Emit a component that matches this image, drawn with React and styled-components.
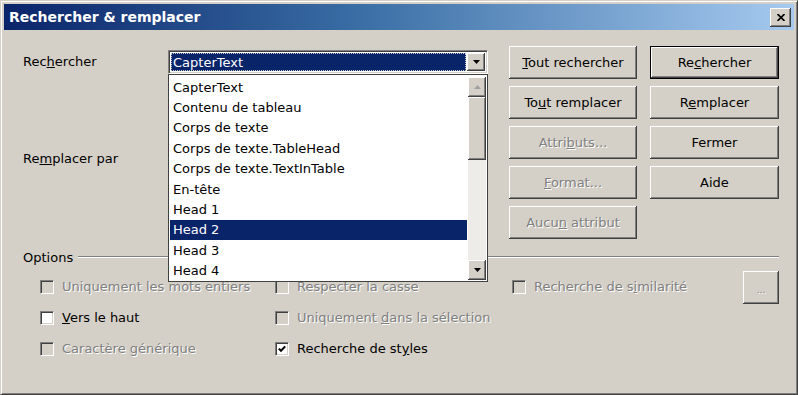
import React from 'react';
import styled, { createGlobalStyle, css } from 'styled-components';

const GlobalStyle = createGlobalStyle`
  html, body {
    margin: 0;
    padding: 0;
    background: #ffffff;
  }
  body {
    font-family: "DejaVu Sans", sans-serif;
    font-size: 13px;
    color: #000;
  }
`;

const raised = css`
  box-shadow: inset -1px -1px #404040, inset 1px 1px #ffffff,
    inset -2px -2px #808080, inset 2px 2px #d4d0c8;
`;

const disabledText = css`
  color: #808080;
  text-shadow: 1px 1px 0 #ffffff;
`;

const Window = styled.div`
  width: 798px;
  height: 395px;
  box-sizing: border-box;
  background: #d4d0c8;
  border: 1px solid;
  border-color: #d4d0c8 #404040 #404040 #d4d0c8;
  box-shadow: inset 1px 1px #ffffff, inset -1px -1px #808080;
  padding: 3px;
  display: flex;
  flex-direction: column;
`;

const TitleBar = styled.div`
  height: 26px;
  flex-shrink: 0;
  display: flex;
  align-items: center;
  justify-content: space-between;
  padding: 0 3px 0 5px;
  background: linear-gradient(to right, #0a246a 0%, #3a6ea5 45%, #a6caf0 100%);
`;

const Title = styled.span`
  color: #ffffff;
  font-weight: bold;
  font-size: 14px;
`;

const CloseButton = styled.div`
  width: 21px;
  height: 19px;
  background: #d4d0c8;
  ${raised};
  display: flex;
  align-items: center;
  justify-content: center;
`;

const Content = styled.div`
  flex: 1;
  display: flex;
  flex-direction: column;
  padding: 16px 15px 0 19px;
`;

const TopSection = styled.div`
  display: flex;
  gap: 21px;
`;

const LeftPane = styled.div`
  width: 465px;
  display: flex;
  flex-direction: column;
`;

const FieldRow = styled.div`
  display: grid;
  grid-template-columns: 145px 320px;
  align-items: center;
  margin-top: ${(p) => p.$top}px;
`;

const Label = styled.span`
  line-height: 16px;
`;

const ComboWrap = styled.div`
  position: relative;
  height: 24px;
`;

const Combo = styled.div`
  height: 24px;
  box-sizing: border-box;
  background: #ffffff;
  border: 1px solid;
  border-color: #808080 #ffffff #ffffff #808080;
  box-shadow: inset 1px 1px #404040, inset -1px -1px #d4d0c8;
  padding: 2px;
  display: flex;
`;

const ComboValue = styled.div`
  flex: 1;
  background: ${(p) => (p.$selected ? '#0a246a' : '#ffffff')};
  color: ${(p) => (p.$selected ? '#ffffff' : '#000000')};
  outline: ${(p) => (p.$selected ? '1px dotted #c8c8c8' : 'none')};
  outline-offset: -1px;
  display: flex;
  align-items: center;
  padding-left: 2px;
  margin-right: 1px;
`;

const ArrowButton = styled.div`
  width: 18px;
  flex-shrink: 0;
  height: ${(p) => (p.$h ? `${p.$h}px` : 'auto')};
  background: #d4d0c8;
  ${raised};
  display: flex;
  align-items: center;
  justify-content: center;
`;

const DropList = styled.div`
  position: absolute;
  top: 24px;
  left: 0;
  width: 320px;
  height: 208px;
  box-sizing: border-box;
  background: #ffffff;
  border: 1px solid #404040;
  padding: 2px 1px 1px 1px;
  display: flex;
  z-index: 10;
`;

const Items = styled.div`
  flex: 1;
  display: flex;
  flex-direction: column;
  margin-right: 1px;
`;

const Item = styled.div`
  height: 20.4px;
  flex-shrink: 0;
  display: flex;
  align-items: center;
  padding-left: 3px;
  white-space: nowrap;
  background: ${(p) => (p.$active ? '#0a246a' : 'transparent')};
  color: ${(p) => (p.$active ? '#ffffff' : '#000000')};
`;

const ScrollBar = styled.div`
  width: 18px;
  display: flex;
  flex-direction: column;
  background: #eeece8;
`;

const Thumb = styled.div`
  height: 63px;
  background: #d4d0c8;
  ${raised};
`;

const Track = styled.div`
  flex: 1;
`;

const ButtonGrid = styled.div`
  display: grid;
  grid-template-columns: 128px 129px;
  grid-auto-rows: 33px;
  gap: 7px 13px;
`;

const Button = styled.div`
  box-sizing: border-box;
  background: #d4d0c8;
  display: flex;
  align-items: center;
  justify-content: center;
  white-space: pre;
  grid-column: ${(p) => p.$col || 'auto'};
  ${raised};
  ${(p) => p.$disabled && disabledText};
  ${(p) =>
    p.$default &&
    css`
      border: 1px solid #000000;
    `};
`;

const OptionsHeader = styled.div`
  display: flex;
  align-items: center;
  margin-top: 10px;
  height: 16px;
`;

const Rule = styled.div`
  flex: 1;
  margin-left: 5px;
  border-top: 1px solid #808080;
  border-bottom: 1px solid #ffffff;
`;

const OptionsGrid = styled.div`
  display: grid;
  grid-template-columns: 235px 237px 231px 36px;
  grid-template-rows: repeat(3, 31px);
  padding-left: 17px;
  margin-top: 6px;
`;

const CheckRow = styled.div`
  display: flex;
  align-items: center;
  gap: 8px;
  white-space: nowrap;
  grid-column: ${(p) => p.$col};
  grid-row: ${(p) => p.$row};
`;

const Box = styled.div`
  width: 14px;
  height: 14px;
  flex-shrink: 0;
  box-sizing: border-box;
  border: 1px solid;
  border-color: #808080 #ffffff #ffffff #808080;
  box-shadow: inset 1px 1px #404040, inset -1px -1px #d4d0c8;
  background: ${(p) => (p.$disabled ? '#d4d0c8' : '#ffffff')};
  display: flex;
  align-items: center;
  justify-content: center;
`;

const CheckText = styled.span`
  ${(p) => p.$disabled && disabledText};
`;

const SmallButton = styled(Button)`
  grid-column: 4;
  grid-row: 1;
  height: 33px;
  font-size: 9px;
  padding-top: 4px;
`;

const Down = ({ color = '#000' }) => (
  <svg width="7" height="4" viewBox="0 0 7 4">
    <polygon points="0,0 7,0 3.5,4" fill={color} />
  </svg>
);

const Up = ({ color = '#000' }) => (
  <svg width="7" height="4" viewBox="0 0 7 4">
    <polygon points="0,4 7,4 3.5,0" fill={color} />
  </svg>
);

const Tick = () => (
  <svg width="8" height="8" viewBox="0 0 8 8">
    <path d="M0.8 3.6 L3 5.8 L7.2 1.4" stroke="#000" strokeWidth="2" fill="none" />
  </svg>
);

const Check = ({ col, row, checked, disabled, children }) => (
  <CheckRow $col={col} $row={row}>
    <Box $disabled={disabled}>{checked && <Tick />}</Box>
    <CheckText $disabled={disabled}>{children}</CheckText>
  </CheckRow>
);

const styles = [
  'CapterText',
  'Contenu de tableau',
  'Corps de texte',
  'Corps de texte.TableHead',
  'Corps de texte.TextInTable',
  'En-tête',
  'Head 1',
  'Head 2',
  'Head 3',
  'Head 4',
];

export default function App() {
  return (
    <>
      <GlobalStyle />
      <Window>
        <TitleBar>
          <Title>Rechercher &amp; remplacer</Title>
          <CloseButton>
            <svg width="8" height="7" viewBox="0 0 8 7">
              <path d="M0.5 0 L7.5 7 M7.5 0 L0.5 7" stroke="#000" strokeWidth="1.7" />
            </svg>
          </CloseButton>
        </TitleBar>
        <Content>
          <TopSection>
            <LeftPane>
              <FieldRow $top={4}>
                <Label>
                  Rec<u>h</u>ercher
                </Label>
                <ComboWrap>
                  <Combo>
                    <ComboValue $selected>CapterText</ComboValue>
                    <ArrowButton>
                      <Down />
                    </ArrowButton>
                  </Combo>
                  <DropList>
                    <Items>
                      {styles.map((s) => (
                        <Item key={s} $active={s === 'Head 2'}>
                          {s}
                        </Item>
                      ))}
                    </Items>
                    <ScrollBar>
                      <ArrowButton $h={20}>
                        <Up color="#a0a0a0" />
                      </ArrowButton>
                      <Thumb />
                      <Track />
                      <ArrowButton $h={20}>
                        <Down />
                      </ArrowButton>
                    </ScrollBar>
                  </DropList>
                </ComboWrap>
              </FieldRow>
              <FieldRow $top={73}>
                <Label>
                  Re<u>m</u>placer par
                </Label>
                <ComboWrap>
                  <Combo>
                    <ComboValue />
                    <ArrowButton>
                      <Down />
                    </ArrowButton>
                  </Combo>
                </ComboWrap>
              </FieldRow>
            </LeftPane>
            <ButtonGrid>
              <Button>
                <span><u>T</u>out rechercher</span>
              </Button>
              <Button $default>
                <span>Re<u>c</u>hercher</span>
              </Button>
              <Button>
                <span>To<u>u</u>t remplacer</span>
              </Button>
              <Button>
                <span>R<u>e</u>mplacer</span>
              </Button>
              <Button $disabled>
                <span>Attri<u>b</u>uts...</span>
              </Button>
              <Button>Fermer</Button>
              <Button $disabled>
                <span><u>F</u>ormat...</span>
              </Button>
              <Button>Aide</Button>
              <Button $disabled $col={1}>
                <span>Aucu<u>n</u> attribut</span>
              </Button>
            </ButtonGrid>
          </TopSection>
          <OptionsHeader>
            <span>Options</span>
            <Rule />
          </OptionsHeader>
          <OptionsGrid>
            <Check col={1} row={1} disabled>
              Uniquement les mots entiers
            </Check>
            <Check col={2} row={1} disabled>
              Respecter la casse
            </Check>
            <Check col={3} row={1} disabled>
              Recherche de s<u>i</u>milarité
            </Check>
            <SmallButton $disabled>...</SmallButton>
            <Check col={1} row={2}>
              <u>V</u>ers le haut
            </Check>
            <Check col={2} row={2} disabled>
              Uniquement <u>d</u>ans la sélection
            </Check>
            <Check col={1} row={3} disabled>
              Caractère <u>g</u>énérique
            </Check>
            <Check col={2} row={3} checked>
              Recherche de st<u>y</u>les
            </Check>
          </OptionsGrid>
        </Content>
      </Window>
    </>
  );
}
